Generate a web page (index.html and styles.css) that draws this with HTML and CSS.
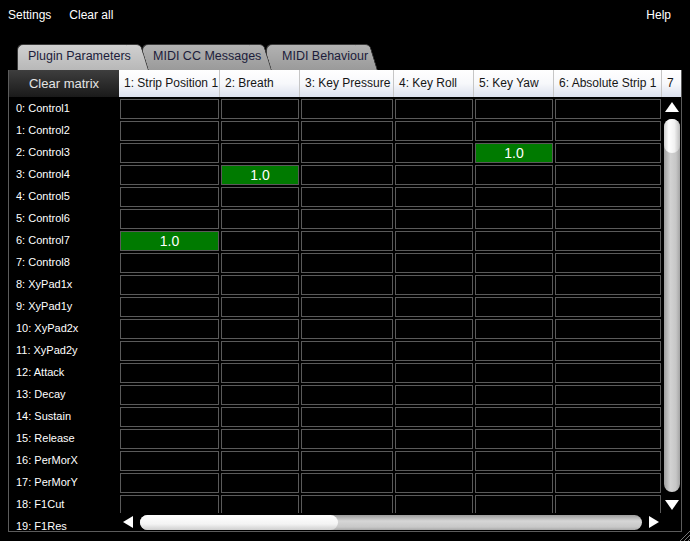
FILE: index.html
```html
<!DOCTYPE html>
<html lang="en">
<head>
    <meta charset="UTF-8">
    <meta name="viewport" content="width=device-width, initial-scale=1.0">
    <title>Parameter Matrix</title>
    <link rel="stylesheet" href="styles.css">
</head>
<body>
    <div class="menubar">
        <span>Settings</span>
        <span>Clear all</span>
        <span class="help">Help</span>
    </div>

    <div class="tabs">
        <div class="tab active tab-params">Plugin Parameters</div>
        <div class="tab tab-cc">MIDI CC Messages</div>
        <div class="tab tab-behaviour">MIDI Behaviour</div>
    </div>

    <div class="panel">
        <div class="clear-btn">Clear matrix</div>
        <div class="col-headers" id="colHeaders"></div>
        <div class="row-labels" id="rowLabels"></div>
        <div class="cells" id="cells"></div>

        <div class="vscroll">
            <svg width="14" height="10" viewBox="0 0 14 10"><polygon points="7,0 14,10 0,10" fill="#fff"/></svg>
            <div class="vtrack"><div class="vthumb"></div></div>
            <svg class="down" width="14" height="10" viewBox="0 0 14 10"><polygon points="0,0 14,0 7,10" fill="#fff"/></svg>
        </div>
        <div class="hscroll">
            <svg width="10" height="12" viewBox="0 0 10 12"><polygon points="0,6 10,0 10,12" fill="#fff"/></svg>
            <div class="htrack"><div class="hthumb"></div></div>
            <svg width="10" height="12" viewBox="0 0 10 12"><polygon points="0,0 10,6 0,12" fill="#fff"/></svg>
        </div>
    </div>

    <svg class="grip" width="10" height="12" viewBox="0 0 10 12">
        <line x1="0" y1="12" x2="10" y2="2" stroke="#777" stroke-width="1"/>
        <line x1="4" y1="12" x2="10" y2="6" stroke="#777" stroke-width="1"/>
        <line x1="8" y1="12" x2="10" y2="10" stroke="#777" stroke-width="1"/>
    </svg>

<script>
    var params = ["Control1", "Control2", "Control3", "Control4", "Control5", "Control6",
        "Control7", "Control8", "XyPad1x", "XyPad1y", "XyPad2x", "XyPad2y", "Attack",
        "Decay", "Sustain", "Release", "PerMorX", "PerMorY", "F1Cut", "F1Res"];
    var cols = ["1: Strip Position 1", "2: Breath", "3: Key Pressure", "4: Key Roll",
        "5: Key Yaw", "6: Absolute Strip 1", "7"];
    var widths = [101, 80, 94, 80, 80, 108, 80];
    // row,col pairs that are mapped
    var mapped = {"2,5": true, "3,2": true, "6,1": true};

    var head = document.getElementById("colHeaders");
    for (var c = 0; c < cols.length; c++) {
        var h = document.createElement("div");
        h.className = "col-head";
        h.style.width = widths[c] + "px";
        h.textContent = cols[c];
        head.appendChild(h);
    }

    var labels = document.getElementById("rowLabels");
    var cells = document.getElementById("cells");
    for (var r = 0; r < params.length; r++) {
        var l = document.createElement("div");
        l.className = "row-label";
        l.textContent = r + ": " + params[r];
        labels.appendChild(l);

        for (var k = 1; k <= cols.length; k++) {
            var cell = document.createElement("div");
            cell.className = "cell";
            if (mapped[r + "," + k]) {
                cell.className += " on";
                cell.textContent = "1.0";
            }
            cells.appendChild(cell);
        }
    }
</script>
</body>
</html>
```

FILE: styles.css
```css
body{
    margin: 0;
    height: 541px;
    overflow: hidden;
    background-color: #000;
    font-family: "Liberation Sans", Arial, sans-serif;
}

.menubar{
    display: flex;
    gap: 18px;
    height: 30px;
    padding: 0 19px 0 8px;
    line-height: 30px;
    font-size: 12px;
    color: #fff;
}
.help{
    margin-left: auto;
}

/* tabs */
.tabs{
    display: flex;
    height: 26px;
    margin: 14px 0 0 17px;
}
.tab{
    position: relative;
    box-sizing: border-box;
    height: 26px;
    padding-left: 10px;
    white-space: nowrap;
    line-height: 23px;
    font-size: 12.5px;
    color: #1c1c3a;
    background: linear-gradient(#b2b2b2, #9a9a9a);
    border-top: 1px solid #3a3a3a;
    border-left: 1px solid #3a3a3a;
    border-top-left-radius: 6px;
}
.tab::after{
    content: "";
    position: absolute;
    z-index: -1;
    top: -1px;
    bottom: 0;
    right: -7px;
    width: 14px;
    background: inherit;
    border-top: 1px solid #3a3a3a;
    border-right: 1px solid #3a3a3a;
    border-top-right-radius: 5px;
    transform: skewX(17deg);
}
.tab.active{
    background: linear-gradient(#d0d0d0, #b8b8b8);
}
.tab-params{
    width: 121px;
    z-index: 3;
}
.tab-cc{
    width: 119px;
    margin-left: 4px;
    z-index: 2;
}
.tab-behaviour{
    width: 101px;
    margin-left: 5px;
    padding-left: 15px;
    z-index: 1;
}

/* matrix panel */
.panel{
    display: grid;
    grid-template-columns: 110px 543px 19px;
    grid-template-rows: 27px 416px 18px;
    margin: 0 8px;
    border: 1px solid #5c5c5c;
    border-top: 0;
}
.clear-btn{
    background: linear-gradient(#3e3e3e, #1a1a1a);
    color: #e4e4e4;
    font-size: 13px;
    line-height: 27px;
    text-align: center;
}
.col-headers{
    grid-column: 2 / 4;
    display: flex;
    overflow: hidden;
    background: linear-gradient(#ffffff, #f7f8fb 50%, #dce1ee);
}
.col-head{
    flex: none;
    box-sizing: border-box;
    padding-left: 5px;
    border-right: 1px solid #c6c6c6;
    white-space: nowrap;
    overflow: hidden;
    line-height: 27px;
    font-size: 12px;
    color: #151515;
}
.row-labels{
    grid-row: 2 / 4;
    overflow: hidden;
}
.row-label{
    height: 22px;
    padding-left: 7px;
    line-height: 22px;
    font-size: 11px;
    color: #fff;
    white-space: nowrap;
}
.cells{
    display: grid;
    grid-template-columns: 101px 80px 94px 80px 80px 108px 80px;
    grid-auto-rows: 22px;
    overflow: hidden;
}
.cell{
    box-sizing: border-box;
    height: 20px;
    margin: 2px 1px 0 1px;
    border: 1px solid #5a5a5a;
    line-height: 18px;
    font-size: 14px;
    color: #fff;
    text-align: center;
}
.cell.on{
    background-color: #007a00;
}

/* scrollbars */
.vscroll{
    display: flex;
    flex-direction: column;
    align-items: center;
    padding-top: 5px;
}
.vtrack{
    width: 16px;
    height: 373px;
    margin-top: 7px;
    border-radius: 8px;
    background: linear-gradient(to right, #9e9e9e, #d2d2d2 40%, #c6c6c6 75%, #a4a4a4);
}
.vthumb{
    height: 34px;
    border-radius: 8px;
    background: linear-gradient(to right, #cfcfcf, #ffffff 30%, #f2f2f2 65%, #bdbdbd);
}
.vscroll .down{
    margin-top: 8px;
}
.hscroll{
    display: flex;
    align-items: center;
    gap: 7px;
    padding-left: 4px;
}
.htrack{
    width: 502px;
    height: 15px;
    border-radius: 8px;
    background: linear-gradient(#9c9c9c, #d6d6d6 40%, #c8c8c8 80%, #a8a8a8);
}
.hthumb{
    width: 198px;
    height: 15px;
    border-radius: 8px;
    background: linear-gradient(#ffffff, #f4f4f4 60%, #cfcfcf);
}

.grip{
    position: absolute;
    right: 0;
    bottom: 0;
}
```
